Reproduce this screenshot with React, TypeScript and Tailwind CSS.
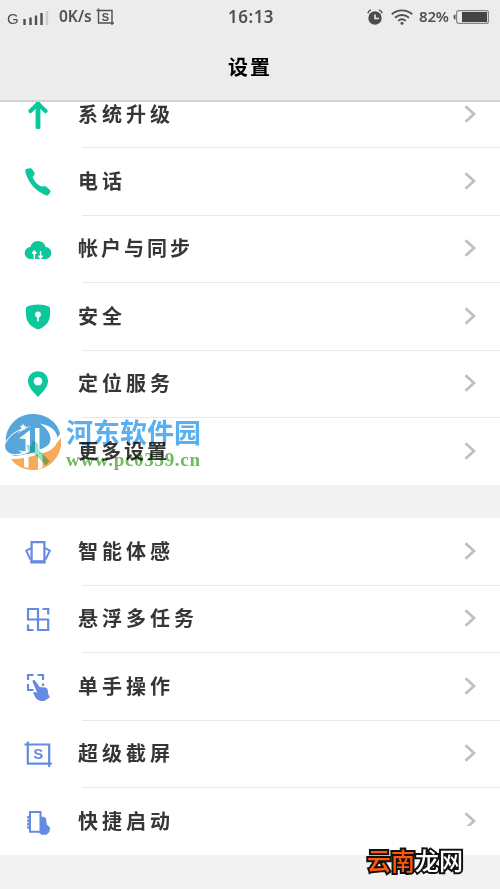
import type { ReactNode } from 'react';

type Item = { label: string; icon: ReactNode; tracking?: string; clipped?: boolean };

const GREEN = '#0cc79b';
const BLUE = '#648ae2';

function Glyph({ children }: { children: ReactNode }) {
  return <svg viewBox="0 0 28 28" className="h-7 w-7 shrink-0" fill="none">{children}</svg>;
}

const UPDATE = (
  <Glyph>
    <path d="M14 2.500V26" stroke={GREEN} strokeWidth="4.800" strokeLinecap="round" />
    <path d="M6.500 10 14 2.800l7.500 7.200" stroke={GREEN} strokeWidth="4.200" strokeLinecap="round" strokeLinejoin="round" />
  </Glyph>
);

const PHONE = (
  <Glyph>
    <path d="M3.200.8 6 .3c.9-.1 1.500.1 2 .8l2.300 3.400c.5.800.5 1.500 0 2.200L8.600 9.200c1.700 4 4.600 7.300 8.700 9.300l3.400-.3c.7 0 1.200.1 1.700.6l3.700 3.500c.6.600.7 1.300.3 1.900l-1.900 2.600c-.5.700-1.300.9-2.100.6C12.500 24 3.500 14.500 1.300 3.600 1 2 1.700 1 3.200.8Z" fill={GREEN} />
  </Glyph>
);

const CLOUD = (
  <Glyph>
    <path d="M7 24a6 6 0 0 1-.6-12A7.800 7.800 0 0 1 21.600 12 6 6 0 0 1 21 24Z" fill={GREEN} />
    <path d="M10.300 24v-6.500M8.200 18.500l2.100-2.300 2.100 2.300M16.600 16v6.500M14.500 20.800l2.100 2.300 2.100-2.300" stroke="#fff" strokeWidth="1.500" />
  </Glyph>
);

const SHIELD = (
  <Glyph>
    <path d="M14 1.500c4 0 8 .8 11.200 2.300.6.3.8.7.8 1.300v6.400c0 7-4.600 12.500-12 15-7.400-2.500-12-8-12-15V5.100c0-.6.2-1 .8-1.300C6 2.300 10 1.500 14 1.500Z" fill={GREEN} />
    <circle cx="14" cy="11.500" r="2.900" fill="#fff" />
    <path d="M14 12v6.500" stroke="#fff" strokeWidth="1.600" />
  </Glyph>
);

const PIN = (
  <Glyph>
    <path d="M14 1.300c5.600 0 10 4.200 10 9.700C24 17.500 18.500 22 14 27 9.500 22 4 17.500 4 11c0-5.500 4.400-9.700 10-9.700Z" fill={GREEN} />
    <circle cx="14" cy="11.300" r="4.300" fill="#fff" />
  </Glyph>
);

const WRENCH = (
  <Glyph>
    <path d="M2.500 6.500 7.500 8l1-5.500c4.500.5 6.500 4 5.500 8.500l11.500 12-3.500 4.500L10 15.500c-4 .5-7.500-4-7.500-9Z" fill="#8fe6cf" />
  </Glyph>
);

const MOTION = (
  <Glyph>
    <path d="M7.600 4.200h12.800v20.300H7.600z" stroke={BLUE} strokeWidth="2.200" />
    <path d="M6.500 23.600h15" stroke={BLUE} strokeWidth="2.800" />
    <path d="M7 10.200 2.200 12.600l4.300 9M21 10.200l4.800 2.400-4.300 9" stroke={BLUE} strokeWidth="2" />
  </Glyph>
);

const MULTITASK = (
  <Glyph>
    <path d="M4 4h10v10.500H4zM14 14.500h10.200V25H14z" stroke={BLUE} strokeWidth="2.200" />
    <path d="M18.500 4h5.700v5.500M4 19.500V25h5.500" stroke={BLUE} strokeWidth="2.200" />
  </Glyph>
);

const ONE_HAND = (
  <Glyph>
    <path d="M4 7V2h5.500M13.500 2H19v5M4 11v6h5.500M19 10.500V13" stroke={BLUE} strokeWidth="2.200" />
    <path d="M9 7.300c1-.5 1.900 0 2.500 1l4.200 5.700 5 .4c1.800.1 2.800 1 3 2.600l.6 4.200 1.500 3.200-6.300 4c-3.500-.3-6.300-1.400-7.800-3.400l-2.500-5c.3-1.200 1.500-1.300 2.500-.8l1.500.5L8.700 9c-.3-.8-.2-1.400.3-1.700Z" fill={BLUE} />
  </Glyph>
);

const SCREENSHOT = (
  <Glyph>
    <path d="M.5 4.500h24.700v22.500M3.800 1.500v22.200h24" stroke={BLUE} strokeWidth="2.200" />
    <text x="14.300" y="19.400" textAnchor="middle" fill={BLUE} className="font-['Liberation_Sans'] text-[15px] font-bold">S</text>
  </Glyph>
);

const QUICK = (
  <Glyph>
    <path d="M16 8.500 20.500 9l1.500 1.500.8 6 3.200 3-.6 4.500-3 2.700h-5L14.500 24H16Z" fill={BLUE} />
    <path d="M6 4h10.500v19.800H6z" fill="#fff" stroke={BLUE} strokeWidth="2" />
    <path d="M4.200 8v13" stroke={BLUE} strokeWidth="2" strokeDasharray="2.600 .8" />
  </Glyph>
);

const GROUPS: Item[][] = [
  [
    { label: '系统升级', icon: UPDATE },
    { label: '电话', icon: PHONE },
    { label: '帐户与同步', icon: CLOUD, tracking: 'tracking-[3px]' },
    { label: '安全', icon: SHIELD },
    { label: '定位服务', icon: PIN },
    { label: '更多设置', icon: WRENCH, tracking: 'tracking-[3px]' },
  ],
  [
    { label: '智能体感', icon: MOTION },
    { label: '悬浮多任务', icon: MULTITASK },
    { label: '单手操作', icon: ONE_HAND },
    { label: '超级截屏', icon: SCREENSHOT },
    { label: '快捷启动', icon: QUICK, clipped: true },
  ],
];

function StatusBar() {
  return (
    <div className="flex h-[33px] items-center pr-[11px] pl-[7px] font-['Noto_Sans',sans-serif] text-[#505050]">
      <div className="flex w-[221px] items-center">
        <span className="mt-1 w-4 font-['Liberation_Sans',sans-serif] text-[15px] leading-none">G</span>
        <svg viewBox="0 0 26 14" className="mt-0.5 h-3.5 w-[26px]" strokeWidth="2.400">
          <path d="M1.500 8v6M7.500 6.500V14M13 4.500V14M18.500 2v12" stroke="#505050" />
          <path d="M24 0v14" stroke="#cfcfcf" />
        </svg>
        <span className="ml-[10px] w-[37px] text-[15.500px] leading-none font-semibold whitespace-nowrap">0K/s</span>
        <svg viewBox="0 0 18 18" className="h-[18px] w-[18px]" fill="none">
          <path d="M.5 2.500h15.500v14.500M2.500 .5v14.500h15.500" stroke="#505050" strokeWidth="1.400" />
          <text x="9.300" y="12.500" textAnchor="middle" fill="#505050" className="font-['Liberation_Sans'] text-[11px] font-bold">S</text>
        </svg>
      </div>
      <span className="text-[17px] leading-none font-semibold tracking-[0.500px]">16:13</span>
      <div className="ml-auto flex items-center">
        <svg viewBox="0 0 16 16" className="h-4 w-4" fill="none">
          <circle cx="8" cy="9" r="6.700" fill="#4c4c4c" />
          <path d="M8 5.500V9.500h4" stroke="#ececec" strokeWidth="1.600" />
          <path d="M.8 4.300C1.300 2.700 2.300 1.500 4 .9M15.200 4.300C14.700 2.700 13.700 1.500 12 .9" stroke="#4c4c4c" strokeWidth="1.400" />
        </svg>
        <svg viewBox="0 0 22 16" className="ml-2 h-4 w-[22px]" fill="none" stroke="#505050" strokeWidth="1.800">
          <path d="M.8 5.200c6-5.200 14.400-5.200 20.400 0M4 8.700c4.200-3.600 9.800-3.600 14 0M7.200 11.900c2.300-2 5.300-2 7.600 0" />
          <circle cx="11" cy="14.200" r="1.500" fill="#505050" stroke="none" />
        </svg>
        <span className="ml-[6px] w-[31px] text-[15px] leading-none font-semibold tracking-[-0.200px]">82%</span>
        <svg viewBox="0 0 36 14" className="ml-[3px] h-3.5 w-9">
          <path d="M2.500 4.500v5C1 9.500.5 8.500.5 7s.5-2.500 2-2.500Z" fill="#505050" />
          <rect x="3.600" y=".6" width="31.800" height="12.800" rx="2" fill="none" stroke="#858585" strokeWidth="1.200" />
          <path d="M9 2h25v10H9z" fill="#454545" />
        </svg>
      </div>
    </div>
  );
}

function Row({ item, last }: { item: Item; last: boolean }) {
  return (
    <div className="flex h-[67.400px] pl-6">
      <div className="flex w-[58px] shrink-0 items-center">{item.icon}</div>
      <div className={`flex flex-1 items-center justify-between pr-6 pb-px ${last ? '' : 'border-b border-[#e8e8e8]'}`}>
        <span className={`-ml-1 text-[20px] leading-none font-bold whitespace-nowrap text-[#363636] ${item.tracking ?? 'tracking-[4px]'}`}>{item.label}</span>
        <div className="h-[18px] w-3">
          <div className={item.clipped ? 'h-[14px] overflow-hidden' : ''}>
            <svg viewBox="0 0 12 18" className="h-[18px] w-3" fill="none">
              <path d="m1.500 1.200 8.500 7.800-8.500 7.800" stroke="#c0c0c0" strokeWidth="2.800" />
            </svg>
          </div>
        </div>
      </div>
    </div>
  );
}

function SoftwareMark() {
  return (
    <div className="absolute top-[414px] left-[5px] flex mix-blend-multiply">
      <svg viewBox="0 0 56 56" className="h-14 w-14" fill="none">
        <path d="M1 22C4 8 15 0 28 0c14 0 25 9 27 20C46 34 30 40 10 42 2 41 0 34 1 22Z" fill="#57a6db" />
        <path d="M6 45c22 0 40-8 50-21 2 17-11 32-28 32-9 0-17-4-22-11Z" fill="#f7aa59" />
        {/* swoosh opening to the left */}
        <path d="M1 27C6 19 15 14 26 12 14 17 8 23 8 29c0 7 8 9 18 8-8 5-21 6-25 1-1.500-3-1.500-7 0-11Z" fill="#fff" />
        <path d="M0 31c3-7 8-12 16-15C8 24 8 33 17 39 7 42 0 39 0 31Z" fill="#57a6db" />
        <path d="M14 24.500 25 16v21l-4.500 1V25ZM30 14h4.500v23L30 39ZM35 9.500c11 2 18 8 17.500 16C52 33 45 38 34.500 40v-4.500c7-2 11-5 11-10.500 0-6-4-11-10.500-15.500Z" fill="#fff" />
        <path d="M19 40.500h4.500V54L19 53ZM33 40h4.500v14L33 55Z" fill="#fff" />
        <path d="m18 9.500 1 2.300 2.300.2-1.800 1.500.5 2.500-2-1.300-2 1.300.5-2.500-1.800-1.500 2.300-.2Z" fill="#fff" />
      </svg>
      <div className="ml-[5px] flex flex-col">
        <span className="mt-[4px] text-[27px] leading-[28px] font-bold text-[#5aaff0]">河东软件园</span>
        <span className="mt-[5px] font-['Liberation_Serif',serif] text-[19px] leading-[18px] font-bold tracking-[0.700px] text-[#6fba5c]">www.pc0359.cn</span>
      </div>
    </div>
  );
}

export default function App() {
  return (
    <div className="relative flex h-[889px] w-[500px] flex-col overflow-hidden bg-[#f3f3f3] font-['Noto_Sans_CJK_SC',sans-serif]">
      <header className="h-[102px] shrink-0 border-b-2 border-[#d2d2d2] bg-[#ececec]">
        <StatusBar />
        <h1 className="mt-[24px] text-center text-[20px] leading-none font-bold tracking-[2px] text-black">设置</h1>
      </header>
      <main className="flex-1 overflow-hidden">
        <div className="-mt-[21px] flex flex-col gap-[33px]">
          {GROUPS.map((group, i) => (
            <section key={i} className="bg-white">
              {group.map((item, j) => <Row key={item.label} item={item} last={j === group.length - 1} />)}
            </section>
          ))}
        </div>
      </main>
      <SoftwareMark />
      <div className="absolute top-[846px] left-[367px] text-[24px] leading-[28px] font-medium whitespace-nowrap text-white [-webkit-text-stroke:4px_#111] [paint-order:stroke_fill]">
        <span className="text-[#ff5a0a]">云南</span>龙网
      </div>
    </div>
  );
}
